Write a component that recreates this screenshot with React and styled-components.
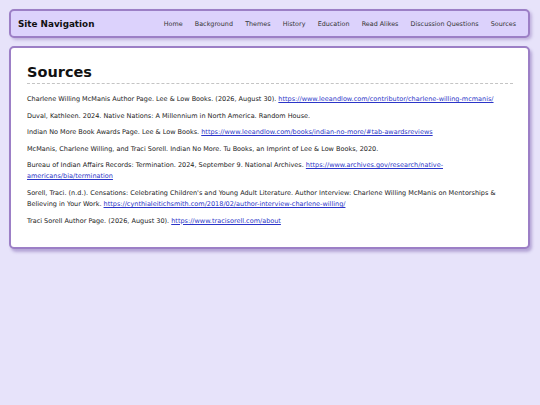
import React from 'react';
import styled, { createGlobalStyle } from 'styled-components';

const GlobalStyle = createGlobalStyle`
  html, body {
    margin: 0;
    padding: 0;
    background: #e7e3fa;
    font-family: "DejaVu Sans", Verdana, sans-serif;
    color: #222;
  }
  body {
    min-height: 405px;
  }
`;

const Page = styled.div`
  padding: 9px 10px 9px 9px;
  display: flex;
  flex-direction: column;
  gap: 8px;
`;

const Header = styled.header`
  display: flex;
  align-items: center;
  justify-content: space-between;
  height: 25px;
  padding: 0 12px 0 7px;
  background: #dcd2fc;
  border: 2px solid #9c7fc6;
  border-radius: 5px;
  box-shadow: 2px 2px 3px rgba(120, 90, 170, 0.35);
`;

const Brand = styled.h1`
  margin: 0;
  font-size: 8.8px;
  font-weight: bold;
  color: #111;
`;

const Nav = styled.nav`
  display: flex;
  gap: 12.2px;
`;

const NavLink = styled.a`
  font-size: 6.4px;
  color: #333;
  text-decoration: none;
`;

const Card = styled.main`
  background: #fff;
  border: 2px solid #9c7fc6;
  border-radius: 5px;
  padding: 16px 15px 15px 16px;
  box-shadow: 2px 3px 3px rgba(120, 90, 170, 0.45);
`;

const Title = styled.h2`
  margin: 0 0 10px;
  padding-bottom: 3px;
  font-size: 14.5px;
  font-weight: bold;
  color: #111;
  border-bottom: 1px dashed #c4c4c4;
`;

const Entry = styled.p`
  margin: 0 0 5.6px;
  font-size: 6.5px;
  line-height: 11px;
  color: #222;
`;

const Link = styled.a`
  color: #2b35c8;
  text-decoration: underline;
`;

const navItems = [
  'Home',
  'Background',
  'Themes',
  'History',
  'Education',
  'Read Alikes',
  'Discussion Questions',
  'Sources',
];

const sources = [
  {
    text: 'Charlene Willing McManis Author Page. Lee & Low Books. (2026, August 30). ',
    url: 'https://www.leeandlow.com/contributor/charlene-willing-mcmanis/',
  },
  { text: 'Duval, Kathleen. 2024. Native Nations: A Millennium in North America. Random House.' },
  {
    text: 'Indian No More Book Awards Page. Lee & Low Books. ',
    url: 'https://www.leeandlow.com/books/indian-no-more/#tab-awardsreviews',
  },
  { text: 'McManis, Charlene Willing, and Traci Sorell. Indian No More. Tu Books, an Imprint of Lee & Low Books, 2020.' },
  {
    text: 'Bureau of Indian Affairs Records: Termination. 2024, September 9. National Archives. ',
    url: 'https://www.archives.gov/research/native-americans/bia/termination',
  },
  {
    text: "Sorell, Traci. (n.d.). Censations: Celebrating Children's and Young Adult Literature. Author Interview: Charlene Willing McManis on Mentorships & Believing in Your Work. ",
    url: 'https://cynthialeitichsmith.com/2018/02/author-interview-charlene-willing/',
  },
  {
    text: 'Traci Sorell Author Page. (2026, August 30). ',
    url: 'https://www.tracisorell.com/about',
  },
];

export default function App() {
  return (
    <>
      <GlobalStyle />
      <Page>
        <Header>
          <Brand>Site Navigation</Brand>
          <Nav>
            {navItems.map((item) => (
              <NavLink key={item} href="#">{item}</NavLink>
            ))}
          </Nav>
        </Header>
        <Card>
          <Title>Sources</Title>
          {sources.map((s, i) => (
            <Entry key={i}>
              {s.text}
              {s.url && <Link href="#">{s.url}</Link>}
            </Entry>
          ))}
        </Card>
      </Page>
    </>
  );
}
